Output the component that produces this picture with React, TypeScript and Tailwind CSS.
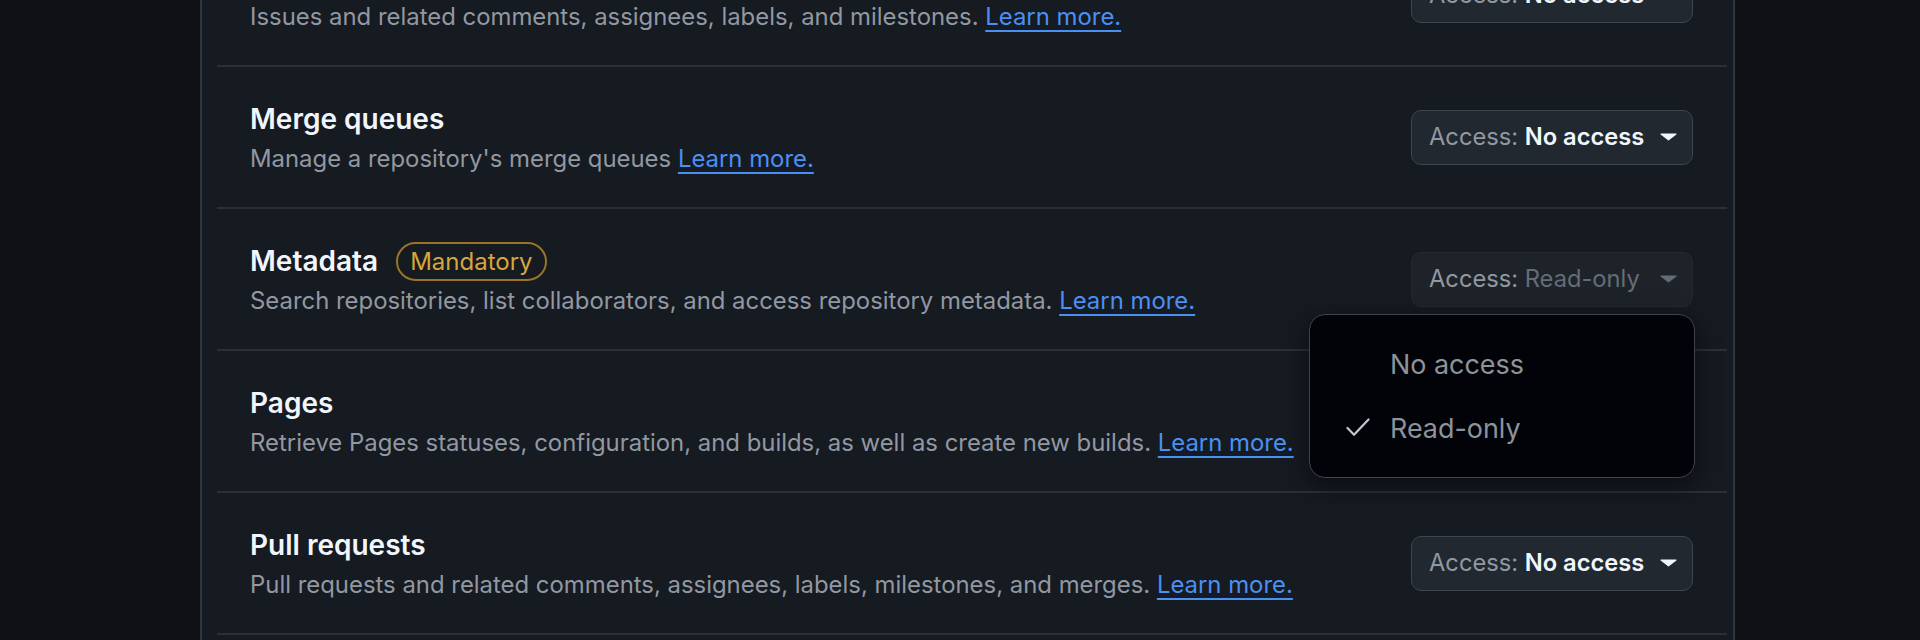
const rows = [
  {
    title: "Issues",
    desc: "Issues and related comments, assignees, labels, and milestones.",
    value: "No access",
  },
  {
    title: "Merge queues",
    desc: "Manage a repository's merge queues",
    value: "No access",
  },
  {
    title: "Metadata",
    desc: "Search repositories, list collaborators, and access repository metadata.",
    value: "Read-only",
    mandatory: true,
    open: true,
  },
  {
    title: "Pages",
    desc: "Retrieve Pages statuses, configuration, and builds, as well as create new builds.",
    value: "No access",
  },
  {
    title: "Pull requests",
    desc: "Pull requests and related comments, assignees, labels, milestones, and merges.",
    value: "No access",
  },
  {
    title: "Repository security advisories",
    desc: "View and manage repository security advisories.",
    value: "No access",
  },
];

const Caret = ({ className }: { className: string }) => (
  <svg width="17" height="8" viewBox="0 0 17 8" className={className}>
    <path d="M1 0.5h15a.6.6 0 0 1 .42 1.02L8.92 7.2a.6.6 0 0 1-.84 0L.58 1.52A.6.6 0 0 1 1 .5Z" fill="currentColor" />
  </svg>
);

const AccessMenu = () => (
  <div className="absolute top-full right-[-2px] z-10 mt-[7px] w-[386px] rounded-[16px] border-[1.5px] border-[#3d444d] bg-[#020308] py-[17px] shadow-[0_8px_24px_rgba(0,0,0,0.5)]">
    {["No access", "Read-only"].map((item) => (
      <div key={item} className="flex h-[64px] items-center">
        <div className="flex w-[80px] justify-end pr-[20px]">
          {item === "Read-only" && (
            <svg width="24" height="19" viewBox="0 0 24 19" fill="none" stroke="#c3c8cf" strokeWidth="2.2" strokeLinecap="round" strokeLinejoin="round">
              <polyline points="1.5,10 8,16.8 22.5,1.5" />
            </svg>
          )}
        </div>
        <span className="text-[26.9px] leading-[32px] text-[#8d939b]">{item}</span>
      </div>
    ))}
  </div>
);

const AccessButton = ({ value, disabled, open }: { value: string; disabled?: boolean; open?: boolean }) => (
  <div className="relative">
    <div
      className={
        disabled
          ? "flex h-[55px] w-[282px] items-center rounded-[10px] border border-[#252a32] bg-[#1e232a] pl-[17px] pr-[15px] text-[23.7px] leading-[32px]"
          : "flex h-[55px] w-[282px] items-center rounded-[10px] border border-[#3d444d] bg-[#212830] pl-[17px] pr-[15px] text-[23.7px] leading-[32px]"
      }
    >
      <span className="text-[#9198a1]">Access:&nbsp;</span>
      <span className={disabled ? "text-[#656c76]" : "font-semibold text-[#f0f6fc]"}>{value}</span>
      <Caret className={disabled ? "ml-auto text-[#656c76]" : "ml-auto text-[#f0f6fc]"} />
    </div>
    {open && <AccessMenu />}
  </div>
);

export default function App() {
  return (
    <div className="h-[640px] w-full overflow-hidden bg-[#0f1115] font-['Inter','Liberation_Sans',sans-serif]">
      <div className="ml-[200px] flex h-full w-[1535px] flex-col border-x-2 border-[#2f353c] bg-[#161a21] pl-[15px] pr-[6px]">
        <div className="-mt-[75px]">
          {rows.map((row) => (
            <div
              key={row.title}
              className="flex h-[142px] items-center justify-between border-b-2 border-[#2b3038] pl-[33px] pr-[34px]"
            >
              <div>
                <div className="flex items-center gap-[18px]">
                  <h3 className="text-[28px] leading-[40px] font-semibold text-[#f0f6fc]">{row.title}</h3>
                  {row.mandatory && (
                    <span className="rounded-full border-2 border-[#9a7428] px-[12px] text-[24px] leading-[35px] text-[#d6a63a]">
                      Mandatory
                    </span>
                  )}
                </div>
                <p className="mt-1 text-[23.9px] leading-[32px] text-[#9198a1]">
                  {row.desc}{" "}
                  <a className="text-[#4a90f4] underline decoration-2 underline-offset-[5px]">Learn more.</a>
                </p>
              </div>
              <AccessButton value={row.value} disabled={row.value === "Read-only"} open={row.open} />
            </div>
          ))}
        </div>
      </div>
    </div>
  );
}
